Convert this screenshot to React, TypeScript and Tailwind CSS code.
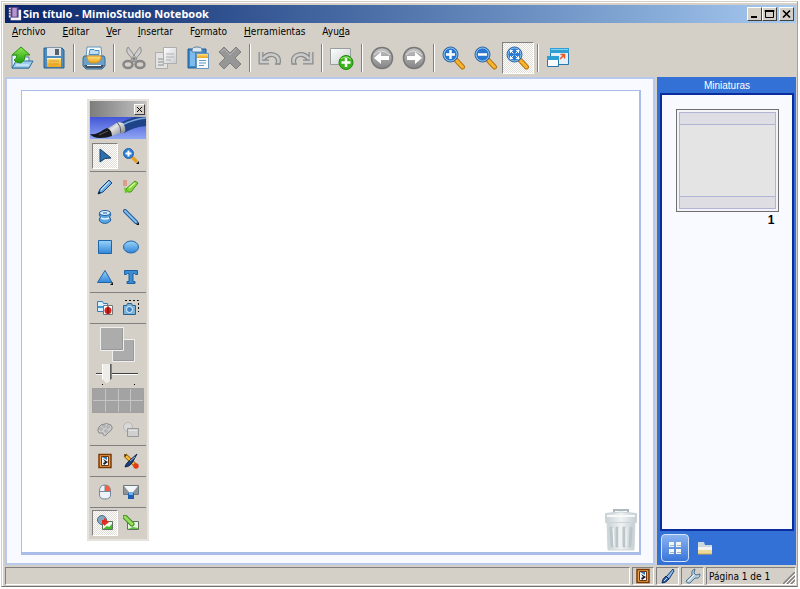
import { type ReactElement, type ReactNode } from 'react'
import clsx from 'clsx'

type IconProps = { children: ReactNode; className?: string; box?: string }

function Icon({ children, className = 'size-6', box = '0 0 24 24' }: IconProps): ReactElement {
  return (
    <svg viewBox={box} className={clsx('block shrink-0', className)} fill="none" aria-hidden="true">
      {children}
    </svg>
  )
}

function Small({ children }: { children: ReactNode }): ReactElement {
  return (
    <Icon box="0 0 16 16" className="size-4">
      {children}
    </Icon>
  )
}

// Shared gradients, referenced by id from every icon.
function Gradients(): ReactElement {
  return (
    <svg className="absolute size-0" aria-hidden="true">
      <defs>
        <linearGradient id="steel" x1="0" y1="0" x2="0" y2="1">
          <stop offset="0" stopColor="#c4c4c4" />
          <stop offset="1" stopColor="#858585" />
        </linearGradient>
        <linearGradient id="sky" x1="0" y1="0" x2="0" y2="1">
          <stop offset="0" stopColor="#9bd3fa" />
          <stop offset="1" stopColor="#2f86d8" />
        </linearGradient>
        <linearGradient id="green" x1="0" y1="0" x2="0" y2="1">
          <stop offset="0" stopColor="#8eea4c" />
          <stop offset="1" stopColor="#1f9a10" />
        </linearGradient>
        <linearGradient id="gold" x1="0" y1="0" x2="0" y2="1">
          <stop offset="0" stopColor="#ffdf80" />
          <stop offset="1" stopColor="#eda416" />
        </linearGradient>
        <linearGradient id="paper" x1="0" y1="0" x2="1" y2="1">
          <stop offset="0" stopColor="#ffffff" />
          <stop offset="1" stopColor="#c9cccf" />
        </linearGradient>
        <linearGradient id="banner" x1="0" y1="0" x2="0" y2="1">
          <stop offset="0" stopColor="#4355d6" />
          <stop offset="1" stopColor="#8fa6f4" />
        </linearGradient>
        <linearGradient id="ferrule" x1="0" y1="0" x2="1" y2="1">
          <stop offset="0" stopColor="#787c82" />
          <stop offset="0.4" stopColor="#e2e4e6" />
          <stop offset="1" stopColor="#6d7075" />
        </linearGradient>
        <linearGradient id="can" x1="0" y1="0" x2="1" y2="0">
          <stop offset="0" stopColor="#c9d1d4" />
          <stop offset="0.5" stopColor="#eef2f3" />
          <stop offset="1" stopColor="#c5ced1" />
        </linearGradient>
      </defs>
    </svg>
  )
}

const OpenIcon = () => (
  <Icon>
    <path d="M2 9h5l2 2h10v11H2z" fill="#e8f2fa" stroke="#4d81a8" />
    <path d="M2 22l4-7h17l-4 7z" fill="#9ccdec" stroke="#2c6c9c" />
    <path d="M6 19h13" stroke="#e8f6ff" />
    <path d="M11 1l9 8h-5q1 5-4 8-5 0-7-3 3-1 3-5H2z" fill="url(#green)" stroke="#2a9312" strokeLinejoin="round" />
  </Icon>
)

const SaveIcon = () => (
  <Icon>
    <path d="M3 2h17l2 2v18H2V2z" fill="#4f8dbe" stroke="#2a5f8b" />
    <path d="M5 2h14v8H5z" fill="#dfe5e9" />
    <path d="M13 3h4v6h-4z" fill="#55616c" />
    <path d="M5 12h14v9H5z" fill="url(#gold)" />
    <path d="M5 12.500h14" stroke="#fff4c8" />
    <path d="M7 15h10M7 18h10" stroke="#d79c24" />
  </Icon>
)

const PrintIcon = () => (
  <Icon>
    <path d="M5 1h14l1 11H4z" fill="#f5fbff" stroke="#6597ba" />
    <path d="M8 3.500h4l1 1h4v4H7z" fill="#bedef3" stroke="#478bbd" />
    <path d="M2 10h20l1 2v8l-3 3H4l-3-3v-8z" fill="#6ba1c8" stroke="#376d95" />
    <path d="M5 10h14v2q-1 5-7 5t-7-5z" fill="url(#gold)" stroke="#d7901b" />
    <path d="M2 19h20l-2 3H4z" fill="#45515d" />
    <path d="M5 19.500h14" stroke="#eef5fa" />
  </Icon>
)

const CutIcon = () => (
  <Icon>
    <path d="M6 1q-3 4 1 8l6 7 2-3zM18 1q3 4-1 8l-6 7-2-3z" fill="#cecece" stroke="#8e8e8e" />
    <ellipse cx="6" cy="18.500" rx="4.500" ry="3.500" stroke="#868686" strokeWidth="2.500" />
    <ellipse cx="18" cy="18.500" rx="4.500" ry="3.500" stroke="#868686" strokeWidth="2.500" />
    <circle cx="12" cy="12.500" r="1.200" fill="#777" />
  </Icon>
)

const CopyIcon = () => (
  <Icon>
    <path d="M1.500 6.500h12v16h-12z" fill="#e3e3e3" stroke="#aeaeae" />
    <path d="M4 13h5M4 16h5M4 19h6" stroke="#aaa" strokeWidth="1.500" />
    <path d="M9.500 1.500h13v16h-13z" fill="url(#paper)" stroke="#aeaeae" />
    <path d="M12 8h8M12 11h8M12 14h5" stroke="#b0b0b0" />
  </Icon>
)

const PasteIcon = () => (
  <Icon>
    <path d="M2 3h18v19H2z" fill="#3c88ca" stroke="#205b97" />
    <path d="M4 5h5v15H4z" fill="#7dbbed" />
    <path d="M6 4q0-3 5-3t5 3v2H6z" fill="#dce7ef" stroke="#5682a6" />
    <path d="M10.500 7.500h12v15h-12z" fill="#f7fbff" stroke="#6896be" />
    <path d="M11 8h11v4H11z" fill="url(#gold)" />
    <path d="M13 14.500h7M13 17h7M13 19.500h5" stroke="#5e97c8" />
  </Icon>
)

const DeleteIcon = () => (
  <Icon>
    <path
      d="M6 1l6 6 6-6 5 5-6 6 6 6-5 5-6-6-6 6-5-5 6-6-6-6z"
      fill="#969696"
      stroke="#808080"
      strokeLinejoin="round"
    />
    <path d="M6 3l6 6 6-6M3 6l3-3" stroke="#b3b3b3" />
  </Icon>
)

// A light band over a wider dark one gives the bevelled arrow.
const BENT_ARROW = 'M5 13q5-6 11-4 6 2 4 9M3 6v10h8'

const BentArrow = () => (
  <>
    <path d={BENT_ARROW} stroke="#8a8a8a" strokeWidth="5" />
    <path d={BENT_ARROW} stroke="#cbcbcb" strokeWidth="2.500" />
    <path d="M17 18h5" stroke="#8a8a8a" strokeWidth="1.500" />
  </>
)

const UndoIcon = () => (
  <Icon>
    <BentArrow />
  </Icon>
)

const RedoIcon = () => (
  <Icon>
    <g transform="matrix(-1 0 0 1 24 0)">
      <BentArrow />
    </g>
  </Icon>
)

const NewPageIcon = () => (
  <Icon>
    <path d="M.500 2.500h20v16H.500z" fill="url(#paper)" stroke="#989fa0" />
    <circle cx="16" cy="16.500" r="7" fill="#38b51b" stroke="#218710" />
    <path d="M11 13q5-4 10 0" stroke="#a5ed84" />
    <path d="M16 12v9M11.500 16.500h9" stroke="#fff" strokeWidth="2.500" />
  </Icon>
)

const BackIcon = () => (
  <Icon>
    <circle cx="12" cy="12" r="10.500" fill="url(#steel)" stroke="#777" strokeWidth="1.500" />
    <path d="M4 9q7-8 16 0" stroke="#dedede" />
    <path d="M4 12l7-6v4h8v4h-8v4z" fill="#fff" />
  </Icon>
)

const ForwardIcon = () => (
  <Icon>
    <circle cx="12" cy="12" r="10.500" fill="url(#steel)" stroke="#777" strokeWidth="1.500" />
    <path d="M4 9q7-8 16 0" stroke="#dedede" />
    <path d="M20 12l-7-6v4H5v4h8v4z" fill="#fff" />
  </Icon>
)

function Magnifier({ children }: { children: ReactNode }): ReactElement {
  return (
    <Icon>
      <path d="M14 14l6.500 7" stroke="#b67312" strokeWidth="5" strokeLinecap="round" />
      <path d="M14.500 14.500l6 6.500" stroke="#f6b52f" strokeWidth="3" strokeLinecap="round" />
      <circle cx="8.500" cy="8.500" r="7.500" fill="#2878d0" stroke="#2a5f9c" />
      <circle cx="8.500" cy="8.500" r="6.500" stroke="#8bc4f2" />
      {children}
    </Icon>
  )
}

const ZoomInIcon = () => (
  <Magnifier>
    <path d="M8.500 4v9M4 8.500h9" stroke="#fff" strokeWidth="2.500" />
  </Magnifier>
)

const ZoomOutIcon = () => (
  <Magnifier>
    <path d="M4 8.500h9" stroke="#fff" strokeWidth="2.500" />
  </Magnifier>
)

const ZoomFitIcon = () => (
  <Magnifier>
    <path d="M4 4h3.500L4 7.500zM13 4v3.500L9.500 4zM13 13H9.500L13 9.500zM4 13V9.500L7.500 13z" fill="#fff" />
    <path d="M5 5l2.500 2.500M12 5L9.500 7.500M12 12L9.500 9.500M5 12l2.500-2.500" stroke="#fff" />
  </Magnifier>
)

const ScreenIcon = () => (
  <Icon>
    <path d="M4.500 2.500h18v16h-18z" fill="#e2f1f9" stroke="#2879a8" />
    <path d="M4 2h19v5H4z" fill="#2fa0d4" />
    <path d="M5 3.500h17" stroke="#83d1ef" />
    <path d="M1.500 10.500h11v10h-11z" fill="#f8fcff" stroke="#2879a8" />
    <path d="M1 10h12v4H1z" fill="#2fa0d4" />
    <path d="M14 13l4-4M14.500 8.500h4v4" stroke="#ee5123" strokeWidth="1.500" />
  </Icon>
)

type ToolbarItem = 'sep' | { label: string; icon: ReactNode; pressed?: boolean }

const TOOLBAR: ToolbarItem[] = [
  { label: 'Abrir', icon: <OpenIcon /> },
  { label: 'Guardar', icon: <SaveIcon /> },
  'sep',
  { label: 'Imprimir', icon: <PrintIcon /> },
  'sep',
  { label: 'Cortar', icon: <CutIcon /> },
  { label: 'Copiar', icon: <CopyIcon /> },
  { label: 'Pegar', icon: <PasteIcon /> },
  { label: 'Eliminar', icon: <DeleteIcon /> },
  'sep',
  { label: 'Deshacer', icon: <UndoIcon /> },
  { label: 'Rehacer', icon: <RedoIcon /> },
  'sep',
  { label: 'Nueva página', icon: <NewPageIcon /> },
  'sep',
  { label: 'Página anterior', icon: <BackIcon /> },
  { label: 'Página siguiente', icon: <ForwardIcon /> },
  'sep',
  { label: 'Acercar', icon: <ZoomInIcon /> },
  { label: 'Alejar', icon: <ZoomOutIcon /> },
  { label: 'Ajustar a la ventana', icon: <ZoomFitIcon />, pressed: true },
  'sep',
  { label: 'Pantalla completa', icon: <ScreenIcon /> }
]

// [before, accelerator, after]
const MENUS = [
  ['', 'A', 'rchivo'],
  ['', 'E', 'ditar'],
  ['', 'V', 'er'],
  ['', 'I', 'nsertar'],
  ['F', 'o', 'rmato'],
  ['', 'H', 'erramientas'],
  ['Ayu', 'd', 'a']
]

const SUNKEN = 'border border-t-[#808080] border-l-[#808080] border-r-white border-b-white'
const RAISED = 'border border-t-white border-l-white border-r-[#404040] border-b-[#404040]'
const PRESSED = 'bg-[repeating-conic-gradient(#ffffff_0_25%,#dedbd5_0_50%)] bg-[length:2px_2px]'

function TitleBar(): ReactElement {
  return (
    <header className="flex h-[18px] shrink-0 items-center bg-linear-to-r from-[#0a246a] to-[#a6caf0] pr-[2px] pl-[3px]">
      <Icon box="0 0 16 16" className="mr-px size-[14px]">
        <path d="M1 0h11v12H1z" fill="#5c3d86" />
        <path d="M5 1h5v10H5z" fill="#b596d2" />
        <path d="M1 1h2v11H1z" fill="#e7e2ef" />
        <path d="M3 12h9V3h3v12H3z" fill="#f4f0f6" />
        <path d="M1 3h2M1 6h2M1 9h2" stroke="#222" />
      </Icon>
      <h1 className="flex-1 font-['Noto_Sans','DejaVu_Sans',sans-serif] text-[11px] leading-4 font-bold whitespace-nowrap text-white">
        Sin título - MimioStudio Notebook
      </h1>
      <button aria-label="Minimizar" className={clsx('flex h-[14px] w-[15px] items-center bg-[#d4d0c8]', RAISED)}>
        <Icon box="0 0 13 12" className="h-3 w-[13px]">
          <path d="M3 9h6" stroke="#000" strokeWidth="2" />
        </Icon>
      </button>
      <button aria-label="Maximizar" className={clsx('flex h-[14px] w-[15px] items-center bg-[#d4d0c8]', RAISED)}>
        <Icon box="0 0 13 12" className="h-3 w-[13px]">
          <path d="M2.500 2.500h8v7h-8zM2 2.500h9v1H2z" stroke="#000" />
        </Icon>
      </button>
      <button aria-label="Cerrar" className={clsx('ml-[2px] flex h-[14px] w-[15px] items-center bg-[#d4d0c8]', RAISED)}>
        <Icon box="0 0 13 12" className="h-3 w-[13px]">
          <path d="M3 2.500l7 7M10 2.500l-7 7" stroke="#000" strokeWidth="1.700" />
        </Icon>
      </button>
    </header>
  )
}

function Toolbar(): ReactElement {
  return (
    <div role="toolbar" className="flex h-[37px] shrink-0 items-start pt-[2px] pl-px">
      {TOOLBAR.map((item, index) =>
        item === 'sep' ? (
          <div key={index} className="flex h-8 w-2 items-center justify-center">
            <div className="h-7 w-[2px] border-r border-l border-r-white border-l-[#808080]" />
          </div>
        ) : (
          <button
            key={index}
            aria-label={item.label}
            aria-pressed={item.pressed}
            className={clsx(
              'flex size-8 items-center justify-center',
              item.pressed && SUNKEN,
              item.pressed && PRESSED
            )}
          >
            {item.icon}
          </button>
        )
      )}
    </div>
  )
}

const FLYOUT = <path d="M16 13v3h-3z" fill="#111" />

function Tool({ label, pressed, children }: { label: string; pressed?: boolean; children: ReactNode }): ReactElement {
  return (
    <button
      aria-label={label}
      aria-pressed={pressed}
      className={clsx('flex size-[26px] items-center justify-center', pressed && SUNKEN, pressed && PRESSED)}
    >
      <Small>{children}</Small>
    </button>
  )
}

function ToolRow({ children }: { children: ReactNode }): ReactElement {
  return <div className="flex h-[30px] items-center justify-center">{children}</div>
}

function Rule(): ReactElement {
  return <div className="h-px bg-[#808080]" />
}

function ColorSection(): ReactElement {
  return (
    <div className="flex h-[91px] flex-col px-[2px] pt-[3px]">
      <Icon box="0 0 36 36" className="ml-2 size-9">
        <path d="M12.500 12.500h22v22h-22z" fill="#acacac" stroke="#efefef" />
        <path d="M.500.500h23v23H.500z" fill="#acacac" stroke="#efefef" />
        <path d="M1.500 22.500h21v-21M13.500 33.500h20v-20" stroke="#999" />
      </Icon>
      <input
        type="range"
        aria-label="Grosor"
        min="0"
        max="100"
        defaultValue="18"
        className="mx-1 h-[21px] w-[42px] appearance-none bg-transparent [&::-webkit-slider-runnable-track]:h-[2px] [&::-webkit-slider-runnable-track]:border-b [&::-webkit-slider-runnable-track]:border-white [&::-webkit-slider-runnable-track]:bg-[#404040] [&::-webkit-slider-thumb]:-mt-[9px] [&::-webkit-slider-thumb]:h-5 [&::-webkit-slider-thumb]:w-[10px] [&::-webkit-slider-thumb]:appearance-none [&::-webkit-slider-thumb]:border-r-2 [&::-webkit-slider-thumb]:border-l [&::-webkit-slider-thumb]:border-l-white [&::-webkit-slider-thumb]:border-r-[#606060] [&::-webkit-slider-thumb]:bg-[#efede9] [&::-webkit-slider-thumb]:[clip-path:polygon(0_0,100%_0,100%_75%,50%_100%,0_75%)]"
      />
      <div className="flex h-[4px] items-start justify-between pr-[9px] pl-[10px]">
        <span className="size-px bg-black" />
        <span className="size-px bg-black" />
      </div>
      <div className="grid h-[25px] grid-cols-4 grid-rows-2 gap-px border border-[#a0a0a0] bg-[#c4c4c4]">
        {Array.from({ length: 8 }, (_, i) => (
          <button key={i} aria-label={`Color ${i + 1}`} className="bg-[#a3a3a3]" />
        ))}
      </div>
    </div>
  )
}

function FrameArt(): ReactElement {
  return (
    <>
      <path d="M2 1.500h12v13H2z" fill="#e9a04b" stroke="#7b3807" strokeWidth="1.500" />
      <path d="M4.500 3.500h7v9h-7z" fill="#f4f8fa" stroke="#6f350b" />
      <path d="M5 4h5v3z" fill="#347ab9" />
      <path d="M6 6l5 3-4 3-1-2 2-1z" fill="#18202b" />
    </>
  )
}

function ToolPalette(): ReactElement {
  return (
    <section
      aria-label="Herramientas"
      className="absolute top-2 left-[65px] w-[62px] border-2 border-[#e6e3de] bg-[#d4d0c8] px-px pb-px"
    >
      <div className="flex h-4 items-center justify-end bg-linear-to-r from-[#7d7d7d] to-[#c3c3c3] pr-px">
        <button aria-label="Cerrar paleta" className={clsx('flex size-[11px] items-center justify-center bg-[#d4d0c8]', RAISED)}>
          <Icon box="0 0 9 9" className="size-[9px]">
            <path d="M2 2l5 5M7 2L2 7" stroke="#000" />
          </Icon>
        </button>
      </div>
      <div className="h-6 border-b-2 border-[#d4d0c8]">
        <svg viewBox="0 0 56 22" className="h-[22px] w-full" preserveAspectRatio="none" aria-hidden="true">
          <path d="M0 0h56v22H0z" fill="url(#banner)" />
          <path d="M30 6Q42 0 56-3V9Q44 10 34 16z" fill="#1f4389" />
          <path d="M32 8Q44 2 56 1" stroke="#7ba6dd" strokeWidth="1.500" fill="none" />
          <path d="M17 12l11-7 5 1q3 4 2 9l-14 4z" fill="url(#ferrule)" />
          <path d="M27 5q4 4 4 11" stroke="#54585e" fill="none" />
          <path d="M0 17q7 1 13-4l4-2q5 2 5 8-5 2-12 2Q3 21 0 17z" fill="#17181c" />
          <path d="M9 18l9-4" stroke="#55575c" fill="none" />
        </svg>
      </div>
      <ToolRow>
        <Tool label="Seleccionar" pressed>
          <path d="M3 1l11 9-6 .500L3 14z" fill="#2f6fac" stroke="#123e6d" strokeLinejoin="round" />
        </Tool>
        <Tool label="Zoom">
          <path d="M10 10l3 3" stroke="#e59f25" strokeWidth="3.500" strokeLinecap="round" />
          <circle cx="5.500" cy="5.500" r="5" fill="#2e7dd1" stroke="#2662a6" />
          <path d="M5.500 2.500v6M2.500 5.500h6" stroke="#fff" strokeWidth="2" />
          {FLYOUT}
        </Tool>
      </ToolRow>
      <Rule />
      <ToolRow>
        <Tool label="Lápiz">
          <path d="M1 15l2-5 9-9 3 3-9 9z" fill="#73b1e5" stroke="#164b82" />
          <path d="M4 11l8-8" stroke="#d5efff" />
          <path d="M1 15l1-3 2 2z" fill="#0c1c30" />
        </Tool>
        <Tool label="Resaltador">
          <path d="M0 1h4v6H0z" fill="#d8a08a" />
          <path d="M5 13l-2-3 9-8 3 2-7 9z" fill="#86d83b" stroke="#439b1b" />
          <path d="M6 9l6-5" stroke="#d4ff98" strokeWidth="1.500" />
          <path d="M1 8l5 5-4 1z" fill="#66c41e" />
        </Tool>
      </ToolRow>
      <ToolRow>
        <Tool label="Borrador">
          <path d="M2.500 4q-1 2 1 4-2 2-1 4 5 5 11 0 1-2-1-4 2-2 1-4z" fill="#5aa4e1" stroke="#25619e" />
          <ellipse cx="8" cy="4" rx="5.500" ry="2.500" fill="#d6eefe" stroke="#25619e" />
          <path d="M4 9q4 2 8 0" stroke="#e5f5ff" strokeWidth="1.500" />
          <path d="M6 4h4" stroke="#25619e" />
        </Tool>
        <Tool label="Línea">
          <path d="M2 2l11 11" stroke="#235d9c" strokeWidth="4" strokeLinecap="round" />
          <path d="M2 2l11 11" stroke="#83bfef" strokeWidth="2" strokeLinecap="round" />
          {FLYOUT}
        </Tool>
      </ToolRow>
      <ToolRow>
        <Tool label="Rectángulo">
          <path d="M1.500 1.500h13v13h-13z" fill="url(#sky)" stroke="#1d64a8" />
        </Tool>
        <Tool label="Elipse">
          <ellipse cx="8" cy="8" rx="7.500" ry="6" fill="url(#sky)" stroke="#1d64a8" />
        </Tool>
      </ToolRow>
      <ToolRow>
        <Tool label="Triángulo">
          <path d="M8 1.500l7 12H.500z" fill="url(#sky)" stroke="#1d64a8" />
          {FLYOUT}
        </Tool>
        <Tool label="Texto">
          <path d="M1.500 1.500h13v4h-2l-1-1H10v8h2v2H4v-2h2v-8H4.500l-1 1h-2z" fill="#398ed3" stroke="#1d5f9f" />
        </Tool>
      </ToolRow>
      <Rule />
      <ToolRow>
        <Tool label="Galería">
          <path d="M.500 1.500h5l1 2h4v8H.500z" fill="#d9efff" stroke="#397eae" />
          <path d="M1 6h6v2H1z" fill="#4099d2" />
          <path d="M6.500 5.500h9v9h-9z" fill="#fff" stroke="#767676" />
          <circle cx="11" cy="10.500" r="3.500" fill="#dc211b" />
          <path d="M11 6v8" stroke="#5a0806" />
        </Tool>
        <Tool label="Captura">
          <path d="M2 .500h13.500V12" stroke="#111" strokeDasharray="2 2" />
          <path d="M.500 5.500h3l1-2h4l1 2h3v9H.500z" fill="#7ab2da" stroke="#285f8f" />
          <circle cx="6.500" cy="9.500" r="3" fill="#3c86c6" stroke="#e8f5ff" />
        </Tool>
      </ToolRow>
      <Rule />
      <ColorSection />
      <ToolRow>
        <Tool label="Paleta de colores">
          <path d="M2 11Q-1 7 4 3q6-3 10 0 3 4-2 7l-3 3q-3 2-3-2z" fill="#ccc" stroke="#8a8a8a" />
          <path d="M3 6h2v2H3zM6 3h2v2H6zM10 4h2v2h-2zM8 8h2v2H8z" fill="#f2f2f2" stroke="#8a8a8a" strokeWidth=".7" />
        </Tool>
        <Tool label="Relleno">
          <circle cx="5" cy="5" r="4.500" fill="#d8d8d8" stroke="#b8b8b8" />
          <path d="M4.500 6.500h11v8h-11z" fill="#cfcfcf" stroke="#989898" />
          <path d="M6 8.500h8" stroke="#e6e6e6" />
        </Tool>
      </ToolRow>
      <Rule />
      <ToolRow>
        <Tool label="Galería de imágenes">
          <FrameArt />
        </Tool>
        <Tool label="Herramientas de dibujo">
          <path d="M2 2l10 10" stroke="#b46b12" strokeWidth="4" />
          <path d="M2 2l9 9" stroke="#f5c13e" strokeWidth="2" />
          <path d="M1 1l3 1-2 2z" fill="#222" />
          <path d="M2 14q1-4 4-6l8-7-5 9q-3 4-7 4z" fill="#1d3f7c" stroke="#12254c" />
          <path d="M7 8l5-4" stroke="#9cb8e2" />
          <circle cx="13" cy="13" r="2.700" fill="#e43b17" />
        </Tool>
      </ToolRow>
      <Rule />
      <ToolRow>
        <Tool label="Botón derecho">
          <path d="M2.500 7q0-6 5.500-6t5.500 6v4q0 4-5.500 4t-5.500-4z" fill="#eef4fa" stroke="#75899c" />
          <path d="M8 1q5.500 0 5.500 6H8z" fill="#ef6040" />
          <path d="M3 7.500h10M8 1v6" stroke="#75899c" />
        </Tool>
        <Tool label="Proyector">
          <path d="M.500 1.500h15v9H.500z" fill="#8c949a" stroke="#70787f" />
          <path d="M1 2h14l-5 6H6z" fill="#f3f6f7" />
          <path d="M5 9h6v6H5z" fill="#1d5eb0" />
          <path d="M6 8h4v3H6z" fill="#6db2ed" />
        </Tool>
      </ToolRow>
      <Rule />
      <ToolRow>
        <Tool label="Insertar objeto" pressed>
          <path d="M5.500 6.500h10v8h-10z" fill="#eef8e9" stroke="#60705e" />
          <path d="M6 14l4-3 2 1 3-3v5z" fill="#45b927" />
          <circle cx="5" cy="5" r="4.500" fill="#87a9c0" stroke="#4c6d83" />
          <path d="M7 3l5 4-5 4V9H5V5h2z" fill="#e22b20" />
        </Tool>
        <Tool label="Editar objeto">
          <path d="M4.500 6.500h11v8h-11z" fill="#e5f5dc" stroke="#60705e" />
          <path d="M5 14l5-2 5 1v1z" fill="#5ac43a" />
          <path d="M2 2l7 7" stroke="#3c8721" strokeWidth="5" strokeLinecap="round" />
          <path d="M2 2l7 7" stroke="#97df5e" strokeWidth="3" strokeLinecap="round" />
        </Tool>
      </ToolRow>
    </section>
  )
}

function TrashCan(): ReactElement {
  return (
    <button aria-label="Papelera" className="absolute right-px bottom-0">
      <Icon box="0 0 34 44" className="h-[44px] w-[34px]">
        <path d="M10 5V2h14v3" stroke="#aeb9bd" strokeWidth="2" />
        <path d="M3 14h28l-1 28H4z" fill="url(#can)" stroke="#d0d8da" />
        <path d="M1.500 5.500q15-3 31 0v9h-31z" fill="url(#can)" stroke="#ccd4d7" />
        <path d="M3 8h28" stroke="#f8fafa" strokeWidth="2" />
        <path d="M7 20l1 18M13 20v18M20 20v18M27 20l-1 18" stroke="#bcc6ca" strokeWidth="3" strokeLinecap="round" />
        <path d="M9 20l1 18M15 20v18M22 20v18" stroke="#f5f8f8" />
      </Icon>
    </button>
  )
}

function Canvas(): ReactElement {
  return (
    <main className="flex min-w-0 flex-1 border-2 border-[#b8c9ec] bg-[#f8faff] pt-[11px] pr-3 pb-2 pl-[14px]">
      <div className="relative flex-1 border border-r-2 border-b-3 border-[#a9bde8] bg-white">
        <ToolPalette />
        <TrashCan />
      </div>
    </main>
  )
}

function Thumbnails(): ReactElement {
  return (
    <aside className="flex w-[139px] shrink-0 flex-col bg-[#3371d7] pr-[2px] pl-[3px]">
      <h2 className="h-4 text-center text-[10px] leading-[18px] text-white">Miniaturas</h2>
      <div className="flex flex-1 flex-col items-center border-2 border-[#0a2c9c] bg-[#f8faff] pt-[14px]">
        <button aria-label="Página 1" className="size-[103px] border border-[#707070] bg-[#f4f4f8] p-[2px]">
          <span className="flex h-full flex-col border border-[#b1b4d4] bg-[#e4e4e4]">
            <span className="h-3 border-b border-[#b1b4d4] bg-[#dddde3]" />
            <span className="flex-1" />
            <span className="h-3 border-t border-[#b1b4d4] bg-[#dddde3]" />
          </span>
        </button>
        <span className="w-[103px] pr-1 text-right text-xs leading-4 font-bold text-black">1</span>
      </div>
      <div className="flex h-[34px] items-center gap-2 pl-px">
        <button
          aria-label="Vista de miniaturas"
          className="flex size-7 items-center justify-center rounded border border-[#d5e5fb] bg-linear-to-b from-[#8ab2ee] to-[#3975d9]"
        >
          <Small>
            <path d="M2 2h5v5H2zM9 2h5v5H9zM2 9h5v5H2zM9 9h5v5H9z" fill="#f4f6f1" />
            <path d="M3 5.500h4M10 5.500h4M3 12.500h4M10 12.500h4" stroke="#a4b6c0" />
          </Small>
        </button>
        <button aria-label="Galería">
          <Small>
            <path d="M1 2h6l1 3h7v9H1z" fill="#cbd9df" />
            <path d="M1 7h14v3H1z" fill="#f3f4ef" />
            <path d="M1 10h14v4H1z" fill="#eeda98" />
            <path d="M1 14h14" stroke="#d3ae52" />
          </Small>
        </button>
      </div>
    </aside>
  )
}

function StatusBar(): ReactElement {
  return (
    <footer className="flex h-5 shrink-0 gap-[2px] pt-[2px]">
      <div className={clsx('flex-1', SUNKEN)} />
      <button aria-label="Galería" className={clsx('flex w-[22px] items-center justify-center', SUNKEN)}>
        <Small>
          <FrameArt />
        </Small>
      </button>
      <button aria-label="Herramientas" className={clsx('flex w-[23px] items-center justify-center', SUNKEN)}>
        <Small>
          <path d="M6 9l7-8 1 2-5 8z" fill="#8db8e6" stroke="#173c75" />
          <path d="M2 15q0-4 4-7l3 3q-3 4-7 4z" fill="#2c5fa7" stroke="#142c5d" />
          <path d="M4 13l3-3" stroke="#c9e1f7" />
        </Small>
      </button>
      <button aria-label="Configuración" className={clsx('flex w-[23px] items-center justify-center', SUNKEN)}>
        <Small>
          <path
            d="M10 1l-1 4 2 2 4-1q0 5-5 4l-5 5q-3 1-4-2l6-6Q6 2 10 1z"
            fill="#b9cedd"
            stroke="#4b7190"
            strokeLinejoin="round"
          />
          <path d="M3 13l6-6" stroke="#f3f9fd" />
        </Small>
      </button>
      <div
        className={clsx(
          "flex w-[90px] items-center justify-between pl-[2px] font-['DejaVu_Sans_Condensed','DejaVu_Sans',sans-serif]",
          SUNKEN
        )}
      >
        <span className="whitespace-nowrap">Página 1 de 1</span>
        <Icon box="0 0 12 12" className="size-3 self-end">
          <path d="M0 12L12 0M4 12l8-8M8 12l4-4" stroke="#808080" strokeWidth="1.500" />
          <path d="M2 12L12 2M6 12l6-6M10 12l2-2" stroke="#fff" />
        </Icon>
      </div>
    </footer>
  )
}

export default function App(): ReactElement {
  return (
    <div className="flex h-screen min-h-[560px] flex-col bg-white p-px pr-[2px] pb-[2px] font-['Liberation_Sans',Arial,sans-serif] text-black">
      <Gradients />
      <div className="flex min-h-0 flex-1 flex-col border border-t-[#d4d0c8] border-r-[#a0a0a0] border-b-[#707070] border-l-[#d4d0c8]">
        <div className="flex min-h-0 flex-1 flex-col border-t border-l border-white bg-[#d4d0c8] p-[2px] pr-px pb-px text-[10px]">
          <TitleBar />
          <nav className="flex h-[17px] shrink-0 items-center gap-[17px] pl-[7px] font-['DejaVu_Sans_Condensed','DejaVu_Sans',sans-serif]">
            {MENUS.map(([before, key, after]) => (
              <button key={before + key + after} className="leading-4">
                {before}
                <u>{key}</u>
                {after}
              </button>
            ))}
          </nav>
          <Toolbar />
          <div className="flex min-h-0 flex-1 gap-[2px]">
            <Canvas />
            <Thumbnails />
          </div>
          <StatusBar />
        </div>
      </div>
    </div>
  )
}
